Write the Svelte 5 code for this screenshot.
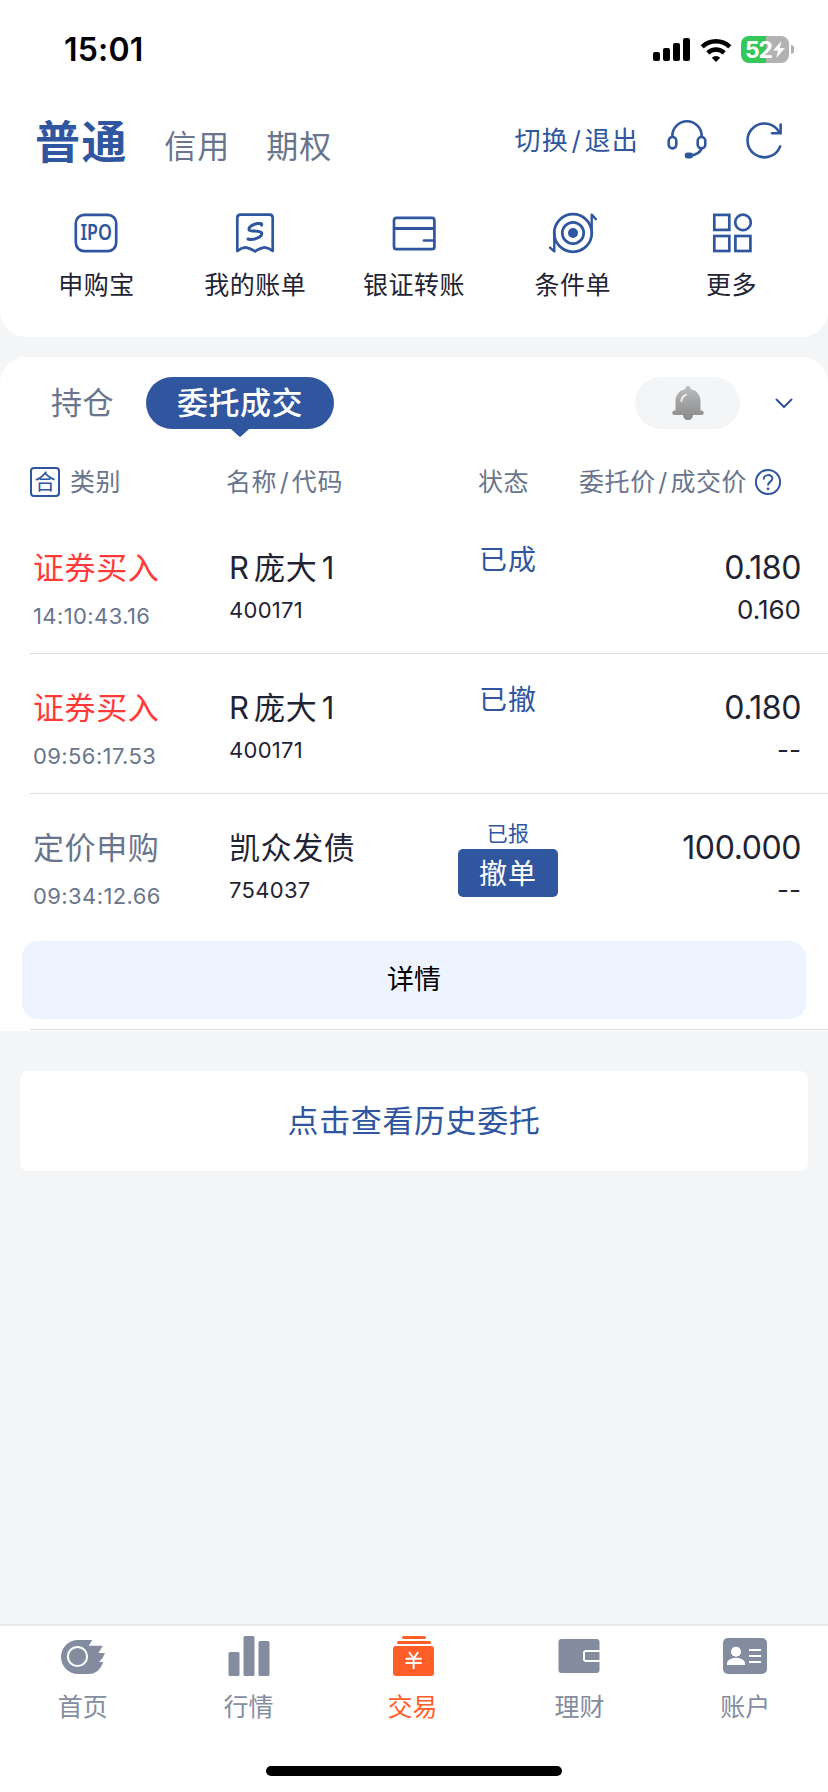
<script lang="ts">
	interface Order {
		type: string;
		buy: boolean;
		time: string;
		name: string;
		code: string;
		status: string;
		cancelable?: boolean;
		price: string;
		dealPrice: string;
	}

	const accounts = ['普通', '信用', '期权'];
	const tools = [
		{ id: 'ipo', label: '申购宝' },
		{ id: 'bill', label: '我的账单' },
		{ id: 'transfer', label: '银证转账' },
		{ id: 'condition', label: '条件单' },
		{ id: 'more', label: '更多' }
	];
	const orders: Order[] = [
		{
			type: '证券买入',
			buy: true,
			time: '14:10:43.16',
			name: 'R庞大1',
			code: '400171',
			status: '已成',
			price: '0.180',
			dealPrice: '0.160'
		},
		{
			type: '证券买入',
			buy: true,
			time: '09:56:17.53',
			name: 'R庞大1',
			code: '400171',
			status: '已撤',
			price: '0.180',
			dealPrice: '--'
		},
		{
			type: '定价申购',
			buy: false,
			time: '09:34:12.66',
			name: '凯众发债',
			code: '754037',
			status: '已报',
			cancelable: true,
			price: '100.000',
			dealPrice: '--'
		}
	];
	const tabs = [
		{ id: 'home', label: '首页' },
		{ id: 'market', label: '行情' },
		{ id: 'trade', label: '交易' },
		{ id: 'wealth', label: '理财' },
		{ id: 'account', label: '账户' }
	];

	let account = $state('普通');
	let panel = $state('orders');
	let tab = $state('trade');

	// latin runs get a little air next to the hanzi
	function splitName(name: string) {
		return name.split(/([A-Z0-9]+)/).filter(Boolean);
	}
</script>

<div class="app">
	<header class="top">
		<div class="status-bar">
			<span class="clock">15:01</span>
			<div class="indicators">
				<svg width="37" height="23" viewBox="0 0 37 23">
					<rect x="0" y="14" width="7" height="9" rx="2" />
					<rect x="10" y="10" width="7" height="13" rx="2" />
					<rect x="20" y="5" width="7" height="18" rx="2" />
					<rect x="30" y="0" width="7" height="23" rx="2" />
				</svg>
				<svg class="wifi" width="32" height="24" viewBox="0 0 32 24">
					<path d="M2.2 8.8a20 20 0 0 1 27.6 0" fill="none" stroke="#000" stroke-width="4.6" />
					<path d="M7.8 14.8a12 12 0 0 1 16.4 0" fill="none" stroke="#000" stroke-width="4.4" />
					<path d="M16 24l-4.2-4.3a6.2 6.2 0 0 1 8.4 0z" />
				</svg>
				<div class="battery">
					<span>52</span>
					<svg width="12" height="17" viewBox="0 0 12 17">
						<path d="M8.5 0L0 9.6h5L3.2 17 12 7H6.8z" fill="#fff" />
					</svg>
				</div>
				<i class="nub"></i>
			</div>
		</div>

		<nav class="accounts">
			{#each accounts as item}
				<button class="account" class:active={account === item} onclick={() => (account = item)}>
					{item}
				</button>
			{/each}
			<button class="switch">切换<i class="slash">/</i>退出</button>
			<svg class="headset" width="40" height="40" viewBox="0 0 40 40" fill="none" stroke="currentColor" stroke-width="2.6">
				<path d="M5.3 17.5V16a14.7 14.7 0 0 1 29.4 0v1.5" />
				<rect x="1.7" y="17" width="7.6" height="11.4" rx="3.8" />
				<rect x="30.7" y="17" width="7.6" height="11.4" rx="3.8" />
				<path d="M34.8 28c-1.6 4.6-5 7-11.5 7.6" />
				<rect x="18.4" y="33.2" width="7" height="4.6" rx="2.3" fill="currentColor" stroke-width="1.4" />
			</svg>
			<svg class="refresh" width="40" height="40" viewBox="0 0 40 40" fill="none" stroke="currentColor" stroke-width="2.6">
				<path d="M35.4 12.6A16.9 16.9 0 1 0 36.2 26.4" stroke-linecap="round" />
				<path d="M36.6 4.6v8.6H28" stroke-linecap="round" />
			</svg>
		</nav>

		<div class="tools">
			{#each tools as tool}
				<button class="tool">
					<svg
						width="48"
						height="44"
						viewBox="0 0 48 44"
						fill="none"
						stroke="currentColor"
						stroke-width="2.7"
					>
						{#if tool.id === 'ipo'}
							<rect x="3.8" y="3.8" width="40.4" height="36.4" rx="8.5" />
							<text x="8.4" y="29.3" textLength="31.5" lengthAdjust="spacingAndGlyphs" class="ipo">IPO</text>
						{:else if tool.id === 'bill'}
							<path
								stroke-linejoin="round"
								d="M6.3 40V6.8q0-3.2 3.2-3.2h29q3.2 0 3.2 3.2V40q-4-3-8-3.6-4 .4-9.7 4-5.7-3.6-9.7-4-4 .6-8 3.6z"
							/>
							<path
								stroke-width="3"
								stroke-linecap="round"
								d="M30.5 14.2c.8-2-1.5-1.9-4-1.6-5 .7-9.5 3.6-8.3 6.3 1.2 2 12.6.3 12.6 3.5 0 3.6-8.3 7.4-13.8 5.6"
							/>
						{:else if tool.id === 'transfer'}
							<rect x="4" y="6.8" width="40.4" height="31.4" rx="2.5" />
							<path d="M4 17.5h40.4" stroke-width="3" />
							<path d="M34 29.5H44" stroke-linecap="round" />
						{:else if tool.id === 'condition'}
							<circle cx="24" cy="22" r="18.8" />
							<circle cx="24" cy="22" r="10.7" />
							<circle cx="24" cy="22" r="5" fill="currentColor" stroke="none" />
							<path
								d="M42.7 23V3.6l4.300 4.600M5.300 21v19.400L1 36.600"
								stroke-width="2.4"
								stroke-linejoin="round"
								stroke-linecap="round"
							/>
						{:else}
							<rect x="6.3" y="3.9" width="15" height="15" />
							<circle cx="35" cy="11.4" r="7.8" />
							<rect x="6.3" y="25" width="15" height="15" />
							<rect x="27.4" y="25" width="15" height="15" />
						{/if}
					</svg>
					<span>{tool.label}</span>
				</button>
			{/each}
		</div>
	</header>

	<section class="orders">
		<div class="panel-bar">
			<button class="panel" class:active={panel === 'holdings'} onclick={() => (panel = 'holdings')}>
				持仓
			</button>
			<button class="panel" class:active={panel === 'orders'} onclick={() => (panel = 'orders')}>
				委托成交
			</button>
			<button class="bell" aria-label="提醒">
				<svg width="32" height="34" viewBox="0 0 32 34">
					<defs>
						<linearGradient id="bell-fill" x1="0" y1="0" x2="0" y2="1">
							<stop offset="0" stop-color="#bdbebf" />
							<stop offset="0.45" stop-color="#a3a4a5" />
							<stop offset="1" stop-color="#8b8b8c" />
						</linearGradient>
					</defs>
					<path
						fill="url(#bell-fill)"
						d="M16 0a2.6 2.6 0 0 1 2.6 3C24.5 4.3 28.5 9 28.5 15v9.5h1a2.3 2.3 0 0 1 0 4.6H21A5 5 0 0 1 11 29.1H2.5a2.3 2.3 0 0 1 0-4.6h1V15C3.5 9 7.5 4.3 13.4 3A2.6 2.6 0 0 1 16 0z"
					/>
					<path d="M9.3 15c.5-3 2-5 4.7-6.3" fill="none" stroke="#f3eee6" stroke-width="2" stroke-linecap="round" />
				</svg>
			</button>
			<svg class="chevron" width="18" height="11" viewBox="0 0 18 11" fill="none" stroke="currentColor" stroke-width="2">
				<path d="M1.5 1.5L9 9l7.5-7.5" stroke-linecap="round" />
			</svg>
		</div>

		<div class="list-head">
			<span class="col-type"><i class="merge">合</i>类别</span>
			<span>名称<i class="slash">/</i>代码</span>
			<span>状态</span>
			<span class="col-price">
				<span>委托价<i class="slash">/</i>成交价</span>
				<svg width="28" height="28" viewBox="0 0 28 28" fill="none" stroke="currentColor" stroke-width="2">
					<circle cx="14" cy="14" r="12.1" />
					<path d="M9.7 11.4c0-5.7 9-5.500 8.700-.6-.2 2.900-4.400 2.900-4.400 6.600" />
					<circle cx="14" cy="20.8" r="1.4" fill="currentColor" stroke="none" />
				</svg>
			</span>
		</div>

		{#each orders as order}
			<article class="order" class:expanded={order.cancelable}>
				<div class="cells">
					<div>
						<div class="title" class:buy={order.buy} class:muted={!order.buy}>{order.type}</div>
						<div class="time">{order.time}</div>
					</div>
					<div>
						<div class="title name">
							{#each splitName(order.name) as part}<span>{part}</span>{/each}
						</div>
						<div class="code">{order.code}</div>
					</div>
					<div class="state">
						{#if order.cancelable}
							<span class="reported">{order.status}</span>
							<button class="cancel">撤单</button>
						{:else}
							<span class="result">{order.status}</span>
						{/if}
					</div>
					<div class="prices">
						<div class="price">{order.price}</div>
						<div class="deal">{order.dealPrice}</div>
					</div>
				</div>
				{#if order.cancelable}
					<button class="detail">详情</button>
				{/if}
			</article>
		{/each}
	</section>

	<button class="history">点击查看历史委托</button>

	<footer class="tabbar">
		<nav>
			{#each tabs as item}
				<button class="tab" class:active={tab === item.id} onclick={() => (tab = item.id)}>
					<svg width="44" height="40" viewBox="0 0 44 40" fill="currentColor">
						{#if item.id === 'home'}
							<path d="M17 4h14.2l-3.4 5.8h14L37.5 17H44l-2.200 4.600c-1 2-2.500 3.200-3.800 4.400h4C40 33 35 38 28 38H17A17 17 0 0 1 17 4z" />
							<circle cx="16.5" cy="20.5" r="9.6" fill="none" stroke="#fff" stroke-width="2" />
						{:else if item.id === 'market'}
							<rect x="2.5" y="16" width="11" height="24" rx="1.5" />
							<rect x="17.5" y="0" width="11" height="40" rx="1.5" />
							<rect x="32.5" y="5" width="11" height="35" rx="1.5" />
						{:else if item.id === 'trade'}
							<rect x="10" y="0" width="24" height="3" rx="1.5" />
							<rect x="5" y="5" width="34" height="3" rx="1.5" />
							<rect x="1" y="10" width="41" height="30" rx="3" />
							<path
								d="M17 16l4.600 6.500 4.600-6.500M13.500 22.800h16.200M13.500 27h16.200M21.600 22.500V33"
								fill="none"
								stroke="#fff"
								stroke-width="2"
							/>
						{:else if item.id === 'wealth'}
							<rect x="0.5" y="3" width="41" height="34" rx="3" />
							<path d="M42 15H28q-2 0-2 2v6q0 2 2 2h14" fill="none" stroke="#fff" stroke-width="2" />
						{:else}
							<rect x="0" y="2" width="44" height="36" rx="5" />
							<circle cx="13" cy="15.8" r="5" fill="#fff" />
							<path d="M4 29v-1.500c0-3 3-5.500 9-5.500s9 2.500 9 5.500V29z" fill="#fff" />
							<path d="M26 14h12M26 20h12M26 26h12" stroke="#fff" stroke-width="2" />
						{/if}
					</svg>
					<span>{item.label}</span>
				</button>
			{/each}
		</nav>
		<div class="home-indicator"></div>
	</footer>
</div>

<style>
	:global(body) {
		background: #f3f5f7;
	}

	.app {
		--blue: #2f569f;
		--grey: #69758c;
		--dark: #1f2434;

		display: flex;
		flex-direction: column;
		width: 828px;
		height: 1792px;
		overflow: hidden;
		background: #f3f5f7;
		color: var(--dark);
		font-family: Inter, 'Noto Sans CJK SC', sans-serif;
		font-size: 25px;
	}

	button {
		padding: 0;
		border: 0;
		background: none;
		color: inherit;
		font: inherit;
		letter-spacing: inherit;
		white-space: nowrap;
		cursor: pointer;
	}

	svg {
		display: block;
		flex: none;
	}

	.slash {
		margin: 0 2.5px;
		font-style: normal;
	}

	.top {
		box-sizing: border-box;
		height: 337px;
		background: #fff;
		border-radius: 0 0 26px 26px;
	}

	.status-bar {
		display: flex;
		justify-content: space-between;
		align-items: center;
		height: 99px;
		padding: 0 34px 0 64px;
		color: #000;
	}

	.clock {
		font-size: 32px;
		font-weight: 600;
		line-height: 40px;
		letter-spacing: 0.2px;
	}

	.indicators {
		display: flex;
		align-items: center;
	}

	.wifi {
		margin: 0 9px 0 10px;
	}

	.battery {
		display: flex;
		align-items: center;
		justify-content: center;
		gap: 1px;
		width: 48px;
		height: 27px;
		border-radius: 8px;
		background: linear-gradient(90deg, #34c759 25px, #b2b2b2 25px);
		color: #fff;
		font-size: 23px;
		font-weight: 700;
		letter-spacing: -1px;
	}

	.nub {
		width: 3px;
		height: 9px;
		margin-left: 2px;
		border-radius: 0 4px 4px 0;
		background: #b2b2b2;
	}

	.accounts {
		display: flex;
		align-items: center;
		height: 83px;
		padding: 2px 44px 0 35px;
		color: var(--blue);
	}

	.account {
		margin: 9px 36px 0 0;
		color: var(--grey);
		font-size: 32px;
		line-height: 48px;
		letter-spacing: 1px;
	}

	.account.active {
		margin-top: 1px;
		color: var(--blue);
		font-size: 45px;
		font-weight: 600;
		letter-spacing: 1.6px;
	}

	.switch {
		margin: -4px 0 0 auto;
		font-size: 26px;
		line-height: 36px;
		letter-spacing: 1.2px;
	}

	.headset {
		margin: -5px 0 0 28px;
	}

	.refresh {
		margin: -5px 0 0 37px;
	}

	.tools {
		display: grid;
		grid-template-columns: repeat(5, 1fr);
		padding: 27px 17px 0;
	}

	.tool {
		display: flex;
		flex-direction: column;
		align-items: center;
		gap: 12px;
		line-height: 36px;
		letter-spacing: 0.5px;
	}

	.tool svg {
		color: var(--blue);
	}

	.ipo {
		fill: currentColor;
		stroke: none;
		font-family: 'Noto Sans', sans-serif;
		font-size: 21.5px;
		font-weight: 600;
		letter-spacing: 0;
	}

	.orders {
		box-sizing: border-box;
		height: 674px;
		margin-top: 20px;
		background: #fff;
		border-radius: 26px 26px 0 0;
	}

	.panel-bar {
		display: flex;
		align-items: center;
		height: 92px;
		padding: 0 35px 0 20px;
	}

	.panel {
		position: relative;
		height: 52px;
		padding: 0 31px;
		border-radius: 26px;
		color: var(--grey);
		font-size: 31px;
		line-height: 52px;
		letter-spacing: 0.5px;
	}

	.panel.active {
		margin-left: 1px;
		background: var(--blue);
		color: #fff;
		font-weight: 500;
	}

	.panel.active::after {
		content: '';
		position: absolute;
		top: 100%;
		left: 50%;
		width: 18px;
		height: 8px;
		margin-left: -9px;
		background: var(--blue);
		clip-path: polygon(0 0, 100% 0, 56% 90%, 50% 100%, 44% 90%);
	}

	.bell {
		display: flex;
		align-items: center;
		justify-content: center;
		width: 105px;
		height: 52px;
		margin-left: auto;
		border-radius: 26px;
		background: #f3f5f7;
	}

	.chevron {
		margin-left: 35px;
		color: var(--blue);
	}

	.list-head {
		display: grid;
		grid-template-columns: 196px 252px 101px 1fr;
		align-items: center;
		height: 65px;
		padding-left: 30px;
		color: var(--grey);
		line-height: 36px;
		letter-spacing: 0.6px;
	}

	.col-type,
	.col-price {
		display: flex;
		align-items: center;
	}

	.col-type {
		gap: 10px;
	}

	.col-price {
		gap: 7px;
	}

	.col-price svg {
		color: var(--blue);
	}

	.merge {
		box-sizing: border-box;
		width: 30px;
		height: 30px;
		border: 2px solid var(--blue);
		border-radius: 4px;
		color: var(--blue);
		font-size: 21px;
		font-style: normal;
		line-height: 26px;
		letter-spacing: 0;
		text-align: center;
	}

	.order {
		box-sizing: border-box;
		height: 140px;
		margin-left: 30px;
		border-bottom: 1px solid #dcdde0;
	}

	.order.expanded {
		height: 236px;
	}

	.cells {
		display: grid;
		grid-template-columns: 196px 229px 100px 1fr;
		height: 139px;
		padding: 0 27px 0 3px;
	}

	.title,
	.price {
		padding-top: 34px;
		font-size: 31px;
		line-height: 40px;
		letter-spacing: 0.6px;
	}

	.title.buy {
		color: #ff3a38;
	}

	.title.muted {
		color: var(--grey);
	}

	.name {
		display: flex;
		gap: 4.5px;
	}

	.time {
		margin-top: 13px;
		color: var(--grey);
		font-size: 22px;
		line-height: 30px;
		letter-spacing: 0.4px;
	}

	.code {
		margin-top: 7px;
		font-size: 22px;
		line-height: 30px;
		letter-spacing: 0.3px;
	}

	.state {
		display: flex;
		flex-direction: column;
		align-items: center;
		color: var(--blue);
	}

	.result {
		padding-top: 26px;
		font-size: 28px;
		line-height: 40px;
		letter-spacing: 0.9px;
	}

	.reported {
		padding-top: 25px;
		font-size: 21px;
		line-height: 30px;
		letter-spacing: 0.3px;
	}

	.cancel {
		width: 100px;
		height: 48px;
		border-radius: 5px;
		background: var(--blue);
		color: #fff;
		font-size: 28px;
		line-height: 50px;
		letter-spacing: 0.9px;
	}

	.prices {
		text-align: right;
	}

	.price {
		font-size: 32px;
		letter-spacing: -0.4px;
	}

	.deal {
		margin-top: 7px;
		font-size: 26px;
		line-height: 30px;
	}

	.detail {
		display: block;
		width: 784px;
		height: 78px;
		margin: 8px 0 0 -8px;
		border-radius: 16px;
		background: #edf4ff;
		color: #000;
		font-size: 27px;
		line-height: 78px;
	}

	.history {
		height: 100px;
		margin: 40px 20px 0;
		border-radius: 8px;
		background: #fff;
		color: var(--blue);
		font-size: 31px;
		line-height: 100px;
		letter-spacing: 0.6px;
	}

	.tabbar {
		box-sizing: border-box;
		height: 168px;
		margin-top: auto;
		border-top: 2px solid #e7e9ec;
		background: #fff;
	}

	.tabbar nav {
		display: grid;
		grid-template-columns: repeat(5, 1fr);
		height: 140px;
	}

	.tab {
		display: flex;
		flex-direction: column;
		align-items: center;
		gap: 13px;
		padding-top: 10px;
		color: #848c9f;
		line-height: 36px;
	}

	.tab.active {
		color: #ff5e28;
	}

	.tab.active span {
		margin-left: -3px;
	}

	.home-indicator {
		width: 296px;
		height: 10px;
		margin: 0 auto;
		border-radius: 5px;
		background: #000;
	}
</style>
